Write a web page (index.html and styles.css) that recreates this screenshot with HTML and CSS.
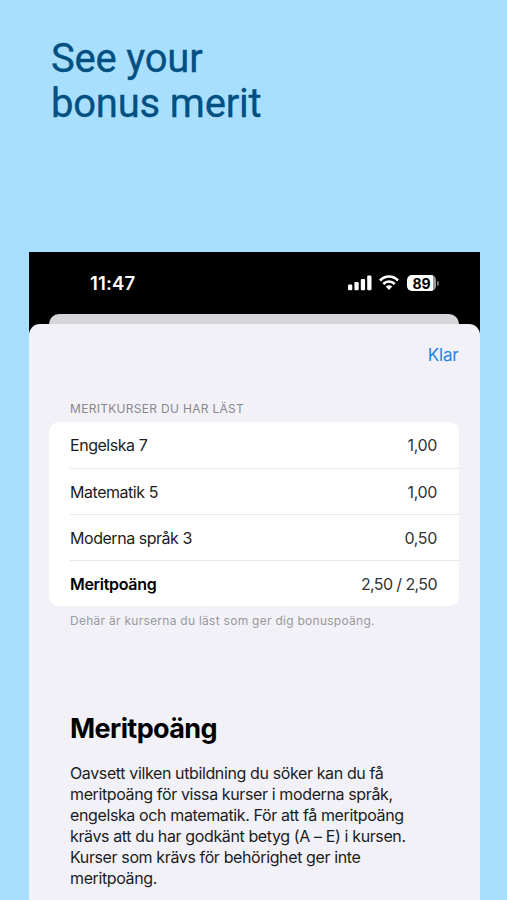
FILE: index.html
```html
<!DOCTYPE html>
<html lang="sv">
<head>
<meta charset="utf-8">
<title>Meritpoäng</title>
<link rel="stylesheet" href="styles.css">
</head>
<body>
<h1 class="headline" lang="en">See your<br>bonus merit</h1>
<main class="phone">
  <div class="status">
    <span class="time">11:47</span>
    <svg class="signal" width="24" height="16" viewBox="0 0 24 16" fill="#fff"><rect x="0" y="9.6" width="4.3" height="5.6" rx="1.2"/><rect x="6.4" y="7" width="4.3" height="8.2" rx="1.2"/><rect x="12.8" y="3.9" width="4.3" height="11.3" rx="1.2"/><rect x="19.2" y="0.6" width="4.3" height="14.6" rx="1.2"/></svg>
    <svg class="wifi" width="20" height="16" viewBox="0 0 20 16" fill="none" stroke="#fff" stroke-width="2.6"><path d="M1 5.500C6 .2 14 .2 19 5.500"/><path d="M4.300 9C7.600 5.700 12.400 5.700 15.700 9"/><path d="M10 15 6.700 11.600Q10 8.900 13.300 11.600Z" fill="#fff" stroke="none"/></svg>
    <span class="battery"><span class="level">89</span></span>
    <span class="battery-tip"></span>
  </div>
  <div class="back-card"></div>
  <section class="sheet">
    <div class="toolbar"><a class="done">Klar</a></div>
    <h2 class="list-title">MERITKURSER DU HAR LÄST</h2>
    <ul class="list">
      <li class="row"><span>Engelska 7</span><span class="value">1,00</span></li>
      <li class="row"><span>Matematik 5</span><span class="value">1,00</span></li>
      <li class="row"><span>Moderna språk 3</span><span class="value">0,50</span></li>
      <li class="row"><b>Meritpoäng</b><span class="value total">2,50 / 2,50</span></li>
    </ul>
    <p class="footnote">Dehär är kurserna du läst som ger dig bonuspoäng.</p>
    <h2 class="title">Meritpoäng</h2>
    <p class="body">Oavsett vilken utbildning du söker kan du få<br>meritpoäng för vissa kurser i moderna språk,<br>engelska och matematik. För att få meritpoäng<br>krävs att du har godkänt betyg (A – E) i kursen.<br>Kurser som krävs för behörighet ger inte<br>meritpoäng.</p>
  </section>
</main>
</body>
</html>
```
FILE: styles.css
```css
* { box-sizing: border-box; margin: 0; padding: 0; }
html, body { height: 900px; overflow: hidden; }
body { background: #a8dfff; font-family: Inter, "Liberation Sans", sans-serif; color: #1c1c1e; }
.headline { height: 252px; padding: 36px 0 0 51px; font: 400 40px/45px Roboto, sans-serif; letter-spacing: -0.2px; color: #005082; -webkit-text-stroke: 0.3px #005082; white-space: nowrap; }
.phone { width: 451px; height: 648px; margin-left: 28.5px; background: #000; display: flex; flex-direction: column; }
.status { height: 62px; display: flex; align-items: center; padding-left: 61.5px; flex: none; }
.time { color: #fff; font-size: 18.5px; font-weight: 600; letter-spacing: 0.15px; width: 258px; }
.signal { flex: none; }
.wifi { margin-left: 7px; flex: none; }
.battery { margin-left: 8px; width: 29px; height: 16px; border-radius: 5px; background: linear-gradient(90deg, #fff 89%, #999 89%); display: flex; justify-content: center; align-items: center; }
.level { color: #000; font-size: 14px; font-weight: 700; }
.battery-tip { width: 2px; height: 5px; margin-left: 1px; border-radius: 0 2px 2px 0; background: #777; }
.back-card { height: 20px; margin: 0 20.5px -10px; border-radius: 10px 10px 0 0; background: #d5d5da; flex: none; }
.sheet { flex: 1; position: relative; background: #f2f1f8; border-radius: 11px 11px 0 0; padding: 0 20.5px; }
.toolbar { height: 61px; display: flex; justify-content: flex-end; align-items: center; padding-right: 0.5px; }
.done { color: #2583e3; font-size: 17px; letter-spacing: -0.2px; }
.list-title { height: 37px; padding: 16px 0 0 21px; font-size: 12px; line-height: 15px; font-weight: 400; letter-spacing: 0.3px; color: #88888d; white-space: nowrap; }
.list { list-style: none; background: #fff; border-radius: 10px; height: 184px; padding-left: 21px; }
.row { height: 46px; display: flex; justify-content: space-between; align-items: center; padding-right: 22px; font-size: 16px; letter-spacing: -0.46px; }
.row + .row { border-top: 1px solid #e9e9ec; }
.row b { font-weight: 600; letter-spacing: -0.3px; color: #000; }
.value { color: #333; letter-spacing: -0.35px; }
.total { letter-spacing: -0.6px; }
.footnote { padding: 7px 0 0 21px; font-size: 12px; line-height: 15px; letter-spacing: 0.27px; color: #99999e; white-space: nowrap; }
.title { padding: 83px 0 0 21px; font-size: 27px; line-height: 36px; font-weight: 700; letter-spacing: -0.6px; color: #000; }
.body { padding: 16px 0 0 21px; font-size: 16px; line-height: 21px; letter-spacing: -0.38px; white-space: nowrap; }
```
